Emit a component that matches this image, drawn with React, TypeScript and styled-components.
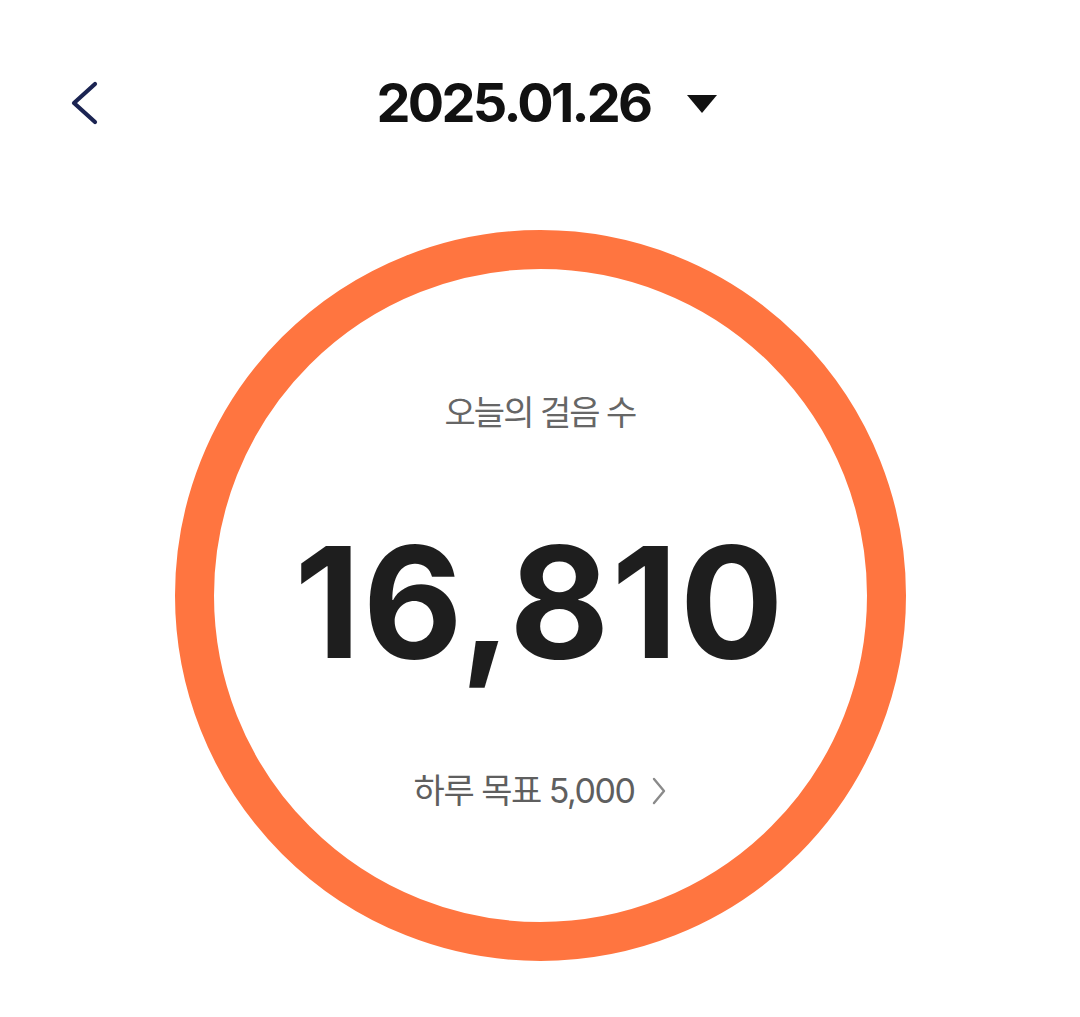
import React from "react";
import styled, { createGlobalStyle } from "styled-components";

const Global = createGlobalStyle`
  html, body { margin: 0; padding: 0; background: #ffffff; }
  body { font-family: Inter, "Noto Sans CJK KR", sans-serif; }
`;

const Page = styled.div`
  width: 1080px;
  min-height: 1017px;
  display: flex;
  flex-direction: column;
  align-items: center;
  background: #fff;
`;

const Header = styled.header`
  width: 100%;
  height: 206px;
  display: grid;
  grid-template-columns: 1fr auto 1fr;
  align-items: center;
`;

const BackButton = styled.button`
  justify-self: start;
  margin-left: 70px;
  width: 30px;
  height: 44px;
  padding: 0;
  border: none;
  background: none;
  display: flex;
  align-items: center;
  justify-content: center;
  cursor: pointer;
`;

const DateGroup = styled.div`
  display: flex;
  align-items: center;
  gap: 37px;
  padding-left: 14px;
`;

const DateText = styled.h1`
  margin: 0;
  font-family: Inter, sans-serif;
  font-weight: 700;
  font-size: 54px;
  line-height: 1;
  color: #111111;
  letter-spacing: -2.7px;
`;

const Caret = styled.span`
  width: 0;
  height: 0;
  border-left: 15px solid transparent;
  border-right: 15px solid transparent;
  border-top: 18px solid #111111;
  margin-top: 2px;
`;

const Ring = styled.section`
  margin-top: 24px;
  width: 731px;
  height: 731px;
  box-sizing: border-box;
  border: 39px solid #ff7540;
  border-radius: 50%;
  display: flex;
  flex-direction: column;
  align-items: center;
  padding-top: 123px;
`;

const Label = styled.div`
  font-family: Inter, "Noto Sans CJK KR", sans-serif;
  font-size: 34px;
  line-height: 41px;
  color: #666666;
  letter-spacing: -2px;
`;

const Count = styled.div`
  margin-top: 92px;
  font-family: Inter, sans-serif;
  font-weight: 700;
  font-size: 154px;
  line-height: 1;
  color: #1e1e1e;
  letter-spacing: 2px;
`;

const GoalRow = styled.button`
  margin-top: 91px;
  padding: 0;
  border: none;
  background: none;
  display: flex;
  align-items: center;
  gap: 18px;
  cursor: pointer;
  font-family: Inter, "Noto Sans CJK KR", sans-serif;
  font-size: 34px;
  line-height: 41px;
  color: #5f5f5f;
  letter-spacing: -1.5px;
`;

export default function App() {
  return (
    <Page>
      <Global />
      <Header>
        <BackButton aria-label="back">
          <svg width="30" height="44" viewBox="0 0 30 44">
            <path d="M25 3 L4 22 L25 41" fill="none" stroke="#1b2452" strokeWidth="4.2" strokeLinecap="round" strokeLinejoin="round" />
          </svg>
        </BackButton>
        <DateGroup>
          <DateText>2025.01.26</DateText>
          <Caret />
        </DateGroup>
        <div />
      </Header>
      <Ring>
        <Label>오늘의 걸음 수</Label>
        <Count>16,810</Count>
        <GoalRow>
          <span>하루 목표 5,000</span>
          <svg width="14" height="28" viewBox="0 0 14 28">
            <path d="M2 2 L12 14 L2 26" fill="none" stroke="#8a8a8a" strokeWidth="2.4" strokeLinecap="round" strokeLinejoin="round" />
          </svg>
        </GoalRow>
      </Ring>
    </Page>
  );
}
